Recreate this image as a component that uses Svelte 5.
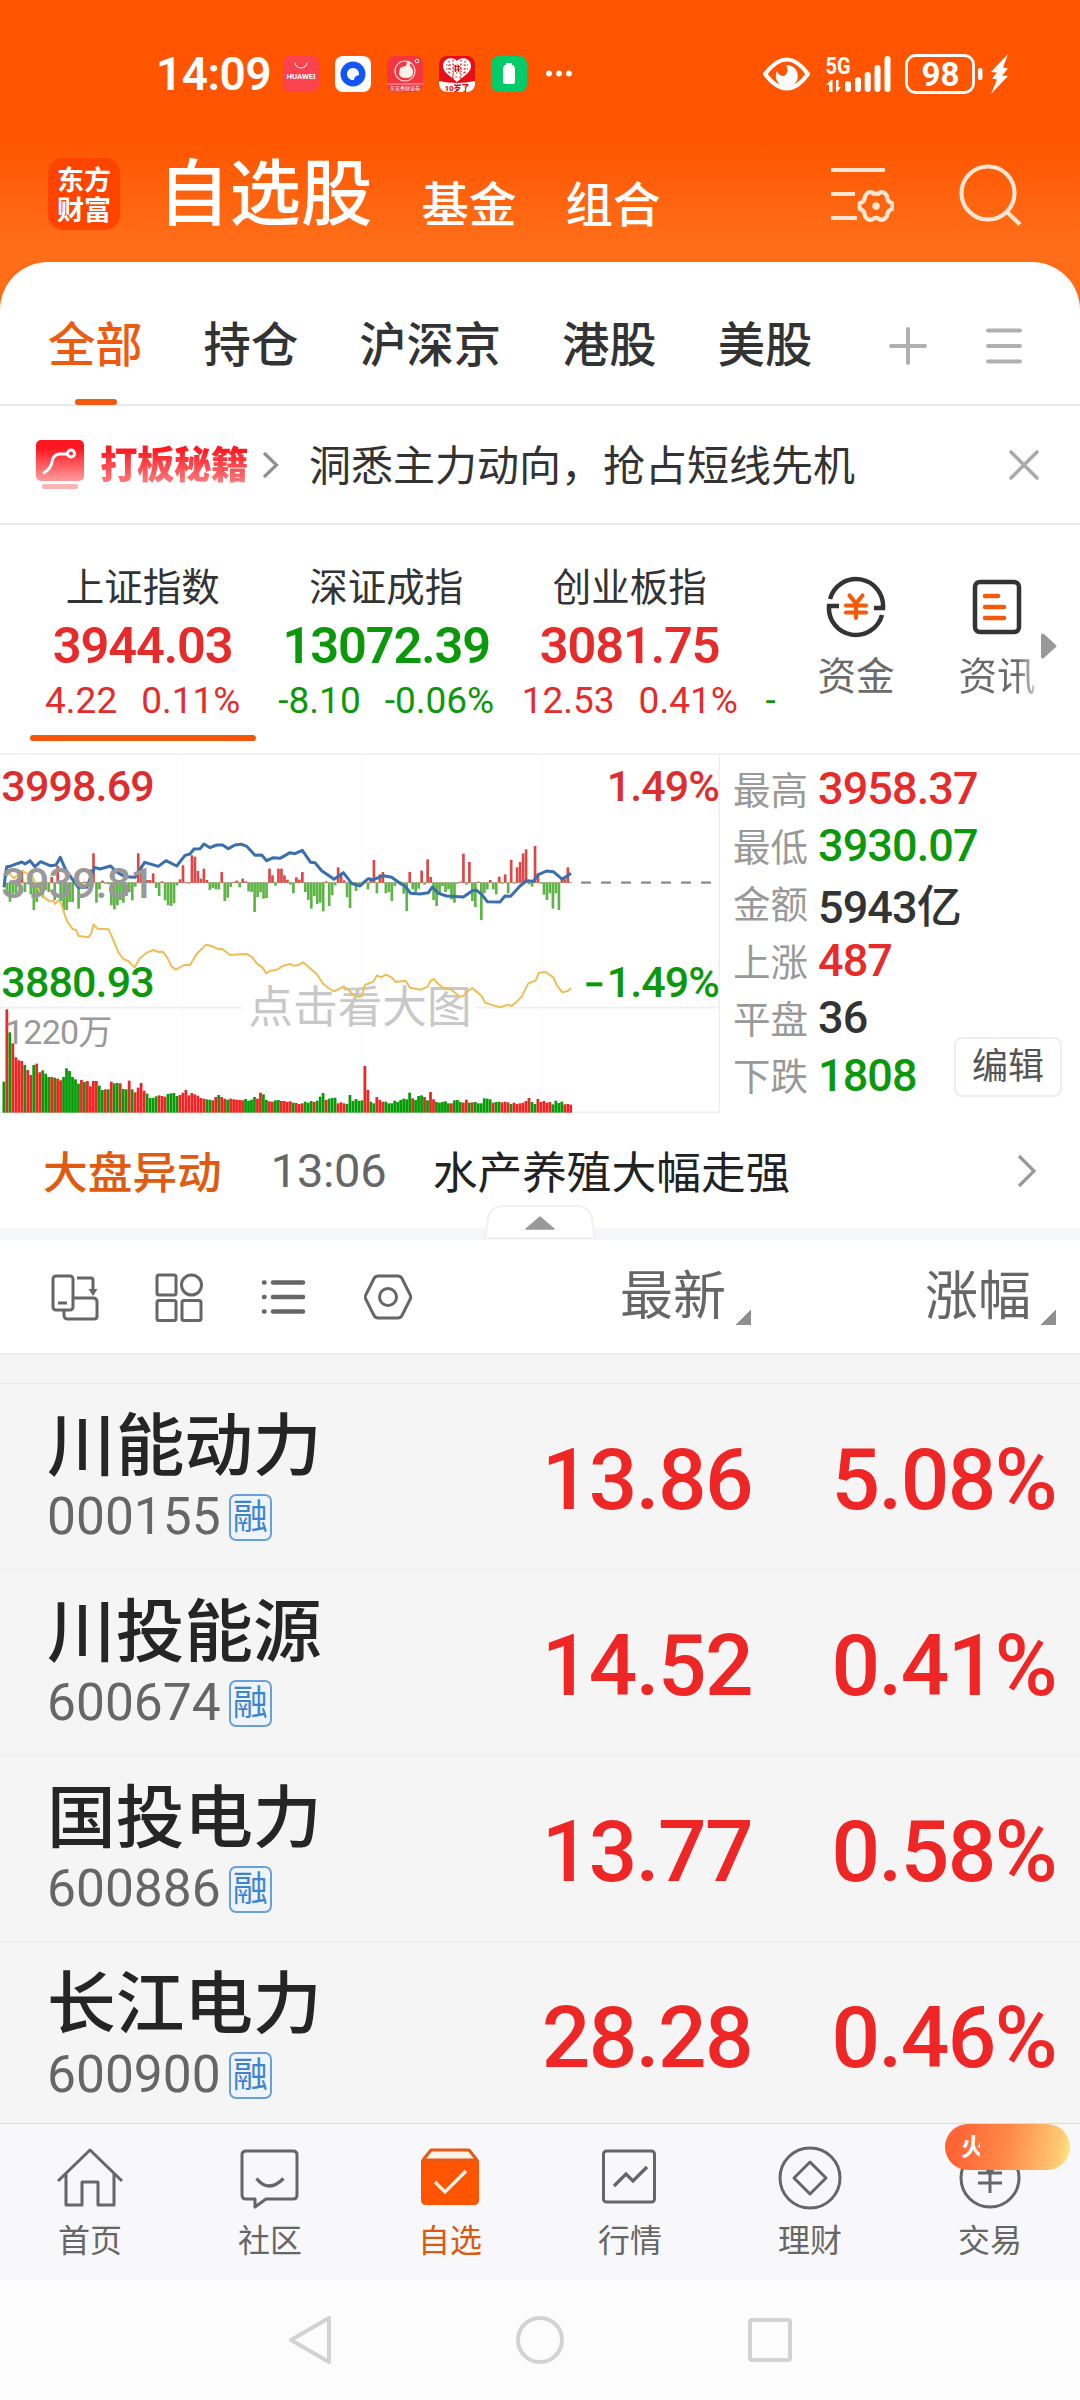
<script>
    const markets = [
        { name: '全部', active: true },
        { name: '持仓' },
        { name: '沪深京' },
        { name: '港股' },
        { name: '美股' }
    ]

    const indices = [
        { name: '上证指数', value: '3944.03', change: '4.22', percent: '0.11%', up: true, active: true },
        { name: '深证成指', value: '13072.39', change: '-8.10', percent: '-0.06%', up: false },
        { name: '创业板指', value: '3081.75', change: '12.53', percent: '0.41%', up: true }
    ]

    const stats = [
        { label: '最高', value: '3958.37', tone: 'up' },
        { label: '最低', value: '3930.07', tone: 'down' },
        { label: '金额', value: '5943亿', tone: '' },
        { label: '上涨', value: '487', tone: 'up' },
        { label: '平盘', value: '36', tone: '' },
        { label: '下跌', value: '1808', tone: 'down' }
    ]

    const stocks = [
        { name: '川能动力', code: '000155', price: '13.86', percent: '5.08%' },
        { name: '川投能源', code: '600674', price: '14.52', percent: '0.41%' },
        { name: '国投电力', code: '600886', price: '13.77', percent: '0.58%' },
        { name: '长江电力', code: '600900', price: '28.28', percent: '0.46%' }
    ]

    // volume per minute bar, r = up, g = down
    const volume = ('g93 r310 g241 r208 r166 r157 r155 g143 r128 r113 g143 r147 r121 g127 g117 g107 r107 g105 r102 r97 g107 g133 g125 g107 g100 g87 r98 g92 r95 r79 r95 r95 g81 g68 r70 g70 r93 g88 g89 r88 g71 g70 r96 g70 r61 r75 r89 r66 g57 g44 g44 g49 r52 r50 r48 g56 g58 g59 g50 r53 r60 r68 r52 r59 r55 r51 r44 r42 g40 g39 r37 r47 g53 r47 r42 g39 r42 r40 r39 r38 r37 g41 g36 g39 g47 r42 r60 g55 g38 r34 r33 g37 g38 r35 r35 r32 r34 g30 r29 r26 r28 g33 g30 g35 r32 g36 g48 g59 r38 g42 g44 g45 r28 r31 r28 g26 g53 g35 g41 g36 '
        + 'g37 r140 r68 g33 g28 r47 r38 r33 g33 g28 g28 g36 g32 g38 g42 g40 g60 r43 g38 g50 g52 r47 g37 r62 r40 g32 g30 g32 g34 g28 r28 g37 g38 g32 r30 r39 g30 r31 g32 g28 g28 g43 g42 g40 r30 g32 g33 r31 r33 r31 g26 r30 r26 r28 r30 r35 r44 g32 g26 r41 r32 r35 r30 r32 g25 g36 g29 g33 r25 r26 r24').split(' ')

    const momentum = [
        0, -35, -57, -33, -33, 25, 32, -28, -5, -35, -82, -58, -35, -45, -22, -28, 17, -52, 50, -55, -82, -82, -58, -58, 3, -78, -5, 3, -5, 40,
        88, -60, -20, 6, -3, -5, -68, -80, -68, -52, -60, -40, -28, -53, -12, 88, 50, 22, 8, 8, 28, -16, -40, 4, -53, -68, -70, -62, -8, 10,
        52, 2, -3, 82, 78, 35, 12, 42, 8, -22, -16, -20, -20, 32, -55, -45, -13, 2, 6, -14, 12, 4, -26, -28, -88, -43, -29, -48, -46, 42,
        22, -9, 42, 42, 22, 9, -6, -32, 16, 9, 32, -28, -52, -78, -40, -64, -60, -86, 4, -70, -38, -8, 46, 28, 7, -44, -76, -8, -25,
        -6, -8, 6, -20, 14, 68, -32, 25, 32, -32, -28, -55, -10, 3, 3, -33, -85, 32, -20, -28, -18, 36, -6, 70, 17, -52, -70, -36, -10, -28,
        -20, -50, -60, -3, 3, 87, -6, 62, -55, -73, 3, -112, -32, -20, 8, -20, -35, 18, -3, 25, -32, 68, -3, 46, 62, 88, 100, -5, -12, 110,
        28, -3, -36, -52, -32, -78, -32, -82, 12, 10, 46
    ]

    const priceLine = '12,412 15,385 20,350 30,349 45,343 66,336 75,342 90,332 105,350 122,335 150,347 168,345 181,322 195,355 210,378 235,412 260,412 284,352 300,357 332,348 348,365 375,380 405,382 420,358 434,337 455,343 475,349 498,332 530,348 555,316 570,312 582,297 600,296 612,282 630,293 650,285 668,285 685,296 705,285 725,283 740,289 765,316 785,315 800,332 820,323 840,325 870,308 885,311 907,301 932,337 945,338 965,362 985,376 1002,388 1030,368 1055,400 1080,408 1095,394 1105,386 1120,389 1150,377 1175,382 1200,400 1215,408 1232,430 1260,432 1285,428 1297,411 1315,430 1340,438 1390,441 1417,422 1430,421 1445,433 1462,455 1500,456 1515,438 1532,439 1560,408 1580,392 1600,394 1615,374 1640,363 1660,365 1687,388 1713,370'
    const averageLine = '20,355 30,372 42,385 66,362 80,370 95,375 110,410 130,440 150,455 160,452 166,462 175,450 185,465 200,512 218,537 228,540 236,558 265,562 274,550 281,523 292,536 326,538 340,570 355,607 370,627 385,633 404,652 420,625 440,608 461,600 475,606 488,605 500,620 515,650 528,659 552,645 570,645 590,612 618,584 635,588 655,598 665,596 690,615 740,612 755,620 770,640 787,652 798,670 812,662 830,660 850,647 870,642 880,647 893,646 910,637 930,655 950,672 970,702 985,714 1003,724 1030,710 1045,718 1060,735 1080,741 1085,738 1095,705 1120,695 1131,676 1143,682 1157,674 1175,682 1187,696 1217,692 1230,713 1262,719 1283,710 1292,692 1301,687 1315,702 1330,714 1352,718 1380,740 1390,738 1400,725 1417,714 1445,738 1455,758 1480,766 1500,772 1525,764 1535,768 1548,757 1565,740 1585,700 1607,692 1617,668 1637,666 1660,682 1670,705 1687,727 1705,722 1713,714'
</script>

<style>
    :global(body) {
        background: #fcfcfc;
    }

    .app {
        width: 1080px;
        height: 2400px;
        overflow: hidden;
        display: flex;
        flex-direction: column;
        font-family: Roboto, "Noto Sans CJK SC", sans-serif;
        color: #333;
        white-space: nowrap;
    }

    svg {
        display: block;
        flex: none;
    }

    .up {
        color: #e62b2b;
    }

    .down {
        color: #0b980b;
    }

    .top {
        height: 310px;
        flex: none;
        background: linear-gradient(#ff5500 0, #ff5500 140px, #ff6d18 240px, #ff6d18 100%);
        color: #fff;
    }

    .status {
        height: 148px;
        display: flex;
        align-items: center;
        padding: 0 72px 0 156px;
        box-sizing: border-box;
    }

    .clock {
        width: 127px;
        font-size: 46px;
        font-weight: 600;
        letter-spacing: -0.5px;
    }

    .notices {
        display: flex;
        gap: 16px;
        flex: 1;
    }

    .header {
        display: flex;
        padding-left: 48px;
        height: 92px;
    }

    .logo {
        width: 72px;
        height: 72px;
        margin-top: 10px;
        border-radius: 15px;
        background: #ff4400;
        font-family: "Noto Sans CJK SC", sans-serif;
        font-size: 27px;
        font-weight: 700;
        line-height: 30px;
        text-align: center;
        box-sizing: border-box;
        padding-top: 6px;
    }

    .title {
        margin-left: 38px;
        font-size: 71.5px;
        line-height: 94px;
        font-weight: 500;
    }

    .section {
        margin-left: 49px;
        font-size: 47.5px;
        line-height: 117px;
        font-weight: 500;
    }

    .actions {
        flex: 1;
        display: flex;
        justify-content: flex-end;
        gap: 65px;
        padding: 16px 58px 0 0;
    }

    .sheet {
        flex: none;
        height: 144px;
        margin-top: -48px;
        border-radius: 48px 48px 0 0;
        background: #fff;
        border-bottom: 2px solid #e8e8e8;
        box-sizing: border-box;
        display: flex;
        align-items: center;
        padding: 25px 54px 0 48px;
    }

    .market {
        position: relative;
        margin-right: 61px;
        font-size: 47.3px;
        line-height: 70px;
        font-weight: 500;
    }

    .market.active {
        color: #ee5a0e;
    }

    .market.active::after {
        content: '';
        position: absolute;
        left: 27px;
        bottom: -24px;
        width: 42px;
        height: 6px;
        border-radius: 3px;
        background: #f2590c;
    }

    .sheet .menu {
        margin-left: 58px;
    }

    .sheet .plus {
        margin-left: 16px;
    }

    .promo {
        flex: none;
        height: 119px;
        background: #fff;
        border-bottom: 2px solid #e8e8e8;
        box-sizing: border-box;
        display: flex;
        align-items: center;
        padding: 0 41px 0 36px;
    }

    .promo-name {
        margin: 0 14px 0 15px;
        padding-bottom: 5px;
        font-family: "Noto Sans CJK SC", sans-serif;
        font-size: 37.5px;
        line-height: 54px;
        font-weight: 900;
        background: linear-gradient(#ff1a22 25%, #ff8080 85%);
        background-clip: text;
        color: transparent;
        letter-spacing: -0.5px;
    }

    .promo-text {
        margin-left: 29px;
        padding-bottom: 5px;
        flex: 1;
        font-size: 42px;
    }

    .indices {
        flex: none;
        height: 230px;
        background: #fff;
        border-bottom: 2px solid #f3f3f3;
        box-sizing: border-box;
        display: flex;
    }

    .index-strip {
        width: 778px;
        padding-left: 21px;
        box-sizing: border-box;
        display: flex;
        overflow: hidden;
    }

    .index {
        position: relative;
        width: 243.5px;
        flex: none;
        display: flex;
        flex-direction: column;
        align-items: center;
    }

    .index.active::after {
        content: '';
        position: absolute;
        left: 9px;
        top: 210px;
        width: 226px;
        height: 6px;
        border-radius: 3px;
        background: #f5560a;
    }

    .index-name {
        margin-top: 37px;
        font-size: 38.5px;
        line-height: 52px;
    }

    .index-value {
        font-size: 50.5px;
        line-height: 60px;
        font-weight: 600;
        margin-top: 2px;
        letter-spacing: -1.1px;
    }

    .index-change {
        display: flex;
        gap: 24px;
        font-size: 37px;
        line-height: 44px;
        margin-top: 3px;
    }

    .peek {
        font-size: 37px;
        line-height: 44px;
        margin: 154px 0 0 14px;
    }

    .shortcut {
        display: flex;
        flex-direction: column;
        align-items: center;
        width: 80px;
        margin: 51px 0 0 38px;
        font-size: 38.5px;
        line-height: 50px;
        color: #6a6a6a;
    }

    .shortcut span {
        margin-top: 14px;
    }

    .shortcut + .shortcut {
        margin-left: 61px;
    }

    .fade {
        background: linear-gradient(90deg, #6a6a6a 75%, #c4c4c4);
        background-clip: text;
        color: transparent;
    }

    .next {
        margin: 108px 0 0 4px;
    }

    .quote {
        flex: none;
        height: 358px;
        display: flex;
        background: #fff;
    }

    .chart text {
        font-family: Roboto, "Noto Sans CJK SC", sans-serif;
    }

    .side {
        flex: 1;
        display: flex;
        justify-content: space-between;
        padding: 5px 18px 0 13px;
    }

    .stats {
        width: 210px;
    }

    .stat {
        display: flex;
        align-items: center;
        height: 57.3px;
        font-size: 45px;
        font-weight: 500;
        letter-spacing: -0.9px;
    }

    .stat-label {
        flex: none;
        width: 85px;
        padding-bottom: 3px;
        font-size: 37.5px;
        font-weight: 400;
        letter-spacing: 0;
        color: #999;
    }

    .edit {
        align-self: flex-end;
        margin-bottom: 16px;
        width: 108px;
        height: 60px;
        line-height: 56px;
        border: 2px solid #eee;
        border-radius: 8px;
        box-sizing: border-box;
        text-align: center;
        font-size: 36px;
        color: #555;
    }

    .event {
        position: relative;
        flex: none;
        height: 127px;
        box-sizing: border-box;
        border-bottom: 12px solid #f5f7fa;
        background: #fff;
        display: flex;
        align-items: center;
        padding: 0 43px 0 43px;
        font-size: 44.7px;
        color: #222;
    }

    .event-kind {
        padding-bottom: 2px;
        color: #e05a10;
        font-weight: 500;
    }

    .event-time {
        width: 162px;
        margin-left: 49px;
        font-size: 47px;
        letter-spacing: -0.3px;
        color: #666;
    }

    .event-text {
        padding-bottom: 2px;
        flex: 1;
    }

    .handle {
        position: absolute;
        left: 484px;
        top: 92px;
    }

    .tools {
        flex: none;
        height: 114px;
        box-sizing: border-box;
        background: #fff;
        border-bottom: 1px solid #e8e8e8;
        display: flex;
        align-items: center;
        padding: 0 24px 0 50px;
        color: #666;
    }

    .tools svg {
        margin-right: 55px;
    }

    .sort {
        display: flex;
        font-size: 53px;
        line-height: 78px;
        color: #666;
    }

    .sort:first-of-type {
        margin-left: auto;
    }

    .sort + .sort {
        margin-left: 174px;
    }

    .sort::after {
        content: '';
        width: 15px;
        height: 15px;
        margin: 52px 0 0 10px;
        background: linear-gradient(135deg, transparent 50%, #8e8e93 50%);
    }

    .list {
        height: 769px;
        flex: none;
        overflow: hidden;
        background: #f5f5f5;
        padding-top: 29px;
        box-sizing: border-box;
    }

    .stock {
        height: 186px;
        box-sizing: border-box;
        border-top: 1px solid #ebebeb;
        display: flex;
        align-items: center;
        padding: 0 24px 0 47px;
    }

    .stock-name {
        font-size: 68.7px;
        line-height: 78px;
        font-weight: 500;
        color: #252525;
    }

    .stock-code {
        display: flex;
        align-items: center;
        margin-top: 1px;
        font-size: 51.5px;
        line-height: 60px;
        color: #666;
    }

    .stock-id {
        width: 430px;
        padding-top: 2px;
    }

    .tag {
        margin-left: 8px;
        width: 43px;
        height: 47px;
        border: 2px solid #6aa0da;
        border-radius: 7px;
        box-sizing: border-box;
        background: #eef4fb;
        color: #3d84cf;
        font-size: 35px;
        line-height: 43px;
        text-align: center;
    }

    .price,
    .percent {
        font-size: 85.5px;
        font-weight: 500;
        line-height: 100px;
        color: #ee2626;
        text-align: right;
        letter-spacing: -1.6px;
        padding-top: 6px;
    }

    .price {
        width: 275px;
    }

    .percent {
        flex: 1;
    }

    .tabbar {
        flex: none;
        height: 157px;
        box-sizing: border-box;
        border-top: 1px solid #dcdcdc;
        background: #f8f8fa;
        display: flex;
    }

    .tab {
        position: relative;
        width: 180px;
        padding-top: 20px;
        display: flex;
        flex-direction: column;
        align-items: center;
        font-size: 32px;
        line-height: 40px;
        color: #666;
    }

    .tab svg {
        margin-bottom: 9px;
    }

    .tab.active {
        color: #d95a12;
    }

    .badge {
        position: absolute;
        left: 45px;
        top: 0;
        width: 125px;
        height: 46px;
        border-radius: 23px;
        box-sizing: border-box;
        padding-left: 16px;
        background: linear-gradient(100deg, #ff6437 10%, #ff8a48 50%, #ffcb75 90%, #fff08a);
        color: #fff;
        font-size: 25px;
        font-weight: 700;
        line-height: 48px;
    }

    .badge span {
        display: block;
        width: 19px;
        overflow: hidden;
    }

    .system {
        flex: none;
        height: 120px;
        background: #fcfcfc;
        display: flex;
        justify-content: center;
        align-items: center;
        gap: 182px;
    }
</style>

<div class="app">
    <div class="top">
        <div class="status">
            <div class="clock">14:09</div>
            <div class="notices">
                <svg width="36" height="36" viewBox="0 0 36 36">
                    <rect width="36" height="36" rx="8" fill="#fb4350" />
                    <path d="M12 6.500a6 5.500 0 0 0 12 0" fill="none" stroke="#fff" stroke-width="1" />
                    <text x="18" y="23" text-anchor="middle" textLength="29" lengthAdjust="spacingAndGlyphs" font-size="7" font-weight="700" fill="#fff">HUAWEI</text>
                </svg>
                <svg width="36" height="36" viewBox="0 0 36 36">
                    <rect width="36" height="36" rx="8" fill="#fff" />
                    <circle cx="18" cy="18" r="12.500" fill="#1456f5" />
                    <path d="M18 12a6 6 0 1 0 1 11.900q0-4 5-5A6 6 0 0 0 18 12z" fill="#fff" />
                </svg>
                <svg width="36" height="36" viewBox="0 0 36 36">
                    <rect width="36" height="36" rx="8" fill="#f53540" />
                    <circle cx="18" cy="15" r="10" fill="none" stroke="#ffd9d2" stroke-width="1.200" />
                    <path d="M13 12q3-2 6-2l1-5 3 0v5q3 2 3 6 0 6-7 6t-7-5z" fill="#fff0ea" />
                    <circle cx="30" cy="5" r="1.800" fill="none" stroke="#fff" />
                    <path d="M0 28h36" stroke="#ffb0b0" stroke-width="1" />
                    <text x="18" y="34" text-anchor="middle" font-size="5" fill="#fff">东吴秀财证券</text>
                </svg>
                <svg width="36" height="36" viewBox="0 0 36 36">
                    <rect width="36" height="36" rx="8" fill="#e60f18" />
                    <path d="M0 25q18 4 36 0v3a8 8 0 0 1-8 8H8a8 8 0 0 1-8-8z" fill="#fff" />
                    <path d="M18 5C14 0 4 2 4 10c0 7 9 11 14 16 5-5 14-9 14-16 0-8-10-10-14-5z" fill="#fff" />
                    <path d="M7 9h22M7 13h22M10 17h16M13 21h10M10 5v14M14 4v19M22 4v19M26 5v14" stroke="#e60f18" stroke-width="1.200" stroke-dasharray="1.500 2" />
                    <path d="M15 10.500h6M15 14h6M16.500 9v7M19.500 9v7" stroke="#e60f18" stroke-width="1" />
                    <text x="18" y="34.500" text-anchor="middle" font-size="8" font-weight="800" fill="#d01018">10岁了</text>
                </svg>
                <svg width="36" height="36" viewBox="0 0 36 36">
                    <rect width="36" height="36" rx="8" fill="#04cb69" />
                    <path d="M15 7h6v2h1.500q1.500 2 1.500 4v13q0 2-2 2h-8q-2 0-2-2V13q0-2 1.500-4H15z" fill="#fff" />
                </svg>
                <svg width="30" height="36" viewBox="0 0 30 36" fill="#fff">
                    <circle cx="6" cy="17.500" r="2.900" /><circle cx="16" cy="17.500" r="2.900" /><circle cx="26" cy="17.500" r="2.900" />
                </svg>
            </div>
            <svg width="246" height="44" viewBox="762 51 246 44" fill="#fff">
                <path d="M765 73q22-29 43 0-21 29-43 0z" fill="none" stroke="#fff" stroke-width="4.200" stroke-linejoin="round" />
                <path d="M786 64a11 11 0 1 1-9 6q2 5 7 5 6-4 2-11z" />
                <text x="825.500" y="73" textLength="25" lengthAdjust="spacingAndGlyphs" font-size="23.500" font-weight="700">5G</text>
                <path d="M826 84l5-5h1.500v12H829v-7.500zM836 79h2.500v7h2.500l-4 5h-1z" />
                <rect x="845" y="80" width="6" height="11" rx="3" /><rect x="855" y="76" width="6" height="15" rx="3" />
                <rect x="864.700" y="71" width="6" height="20" rx="3" /><rect x="874.500" y="64" width="6" height="27" rx="3" />
                <rect x="884.500" y="55" width="6" height="36" rx="3" />
                <rect x="906.500" y="54.500" width="67" height="37" rx="9" fill="none" stroke="#fff" stroke-width="2.800" />
                <text x="940.500" y="85" text-anchor="middle" textLength="38" lengthAdjust="spacingAndGlyphs" font-size="34" font-weight="700">98</text>
                <rect x="978" y="67" width="4.500" height="12" rx="2" />
                <path d="M1008 53l-17 18 6 .500-5 6 5 1-6 14.500 17-18-6-.500 6-7-5-1z" />
            </svg>
        </div>
        <div class="header">
            <div class="logo">东方<br />财富</div>
            <div class="title">自选股</div>
            <div class="section">基金</div>
            <div class="section">组合</div>
            <div class="actions">
                <svg width="64" height="60" viewBox="830 164 64 60" fill="none" stroke="#ffe6d2" stroke-width="4.200">
                    <path d="M831 170h54M831 194h24M831 218h26" />
                    <path d="M871 192q5 4 10 0 4 0 6 4 0 6 5 7 1 3 0 6-5 2-5 7-2 4-6 4-5-4-10 0-4 0-6-4 0-5-5-7-1-3 0-6 5-1 5-7 2-4 6-4z" stroke-linejoin="round" />
                    <circle cx="876" cy="206" r="3.800" fill="#ffe6d2" stroke="none" />
                </svg>
                <svg width="63" height="64" viewBox="958 162 63 64" fill="none" stroke="#ffe6d2" stroke-width="4.200">
                    <circle cx="987" cy="191" r="26.500" /><path d="M1005.500 209.500l13.500 13" />
                </svg>
            </div>
        </div>
    </div>

    <div class="sheet">
        {#each markets as market}
            <div class="market" class:active={market.active}>{market.name}</div>
        {/each}
        <svg class="plus" width="38" height="38" viewBox="0 0 38 38" stroke="#b0b0b0" stroke-width="4" stroke-linecap="round"><path d="M2 19h34M19 2v34" /></svg>
        <svg class="menu" width="38" height="38" viewBox="0 0 38 38" stroke="#b0b0b0" stroke-width="4" stroke-linecap="round"><path d="M3 3.500h32M3 19h32M3 34.500h32" /></svg>
    </div>

    <div class="promo">
        <svg width="49" height="50" viewBox="0 0 49 50">
            <defs>
                <linearGradient id="promo" x1="0" y1="0" x2="0" y2="1"><stop offset="0.200" stop-color="#ff1620" /><stop offset="1" stop-color="#ff9c9c" /></linearGradient>
            </defs>
            <rect width="48" height="41" rx="5" fill="url(#promo)" />
            <path d="M8 33q7-5 8-11 1-7 7-8h8" fill="none" stroke="#fff" stroke-width="3" stroke-linecap="round" />
            <circle cx="35" cy="13.500" r="3.500" fill="none" stroke="#fff" stroke-width="3" />
            <rect x="6" y="44" width="36" height="5" rx="2" fill="#f9b5b5" />
        </svg>
        <div class="promo-name">打板秘籍</div>
        <svg width="18" height="28" viewBox="0 0 18 28" fill="none" stroke="#909090" stroke-width="3.200"><path d="M2 2l12.500 12L2 26" /></svg>
        <div class="promo-text">洞悉主力动向，抢占短线先机</div>
        <svg width="30" height="30" viewBox="0 0 30 30" stroke="#aaa" stroke-width="3.600" stroke-linecap="round"><path d="M2 2l26 26M28 2L2 28" /></svg>
    </div>

    <div class="indices">
        <div class="index-strip">
            {#each indices as index}
                <div class="index" class:active={index.active}>
                    <div class="index-name">{index.name}</div>
                    <div class="index-value {index.up ? 'up' : 'down'}">{index.value}</div>
                    <div class="index-change {index.up ? 'up' : 'down'}"><span>{index.change}</span><span>{index.percent}</span></div>
                </div>
            {/each}
            <div class="peek down">-</div>
        </div>
        <div class="shortcut">
            <svg width="62" height="62" viewBox="0 0 62 62" fill="none" stroke="#333" stroke-width="4.500">
                <path d="M5 23a27 27 0 0 1 53 9h-9M57 39a27 27 0 0 1-53-9h10" />
                <path d="M24.500 19.500l6.500 8 6.500-8M31 27v15M21 29.500h20M21 36.500h20" stroke="#f55a0a" stroke-width="4.200" stroke-linecap="round" />
            </svg>
            <span>资金</span>
        </div>
        <div class="shortcut">
            <svg width="62" height="62" viewBox="0 0 62 62" fill="none" stroke="#333" stroke-width="4.500">
                <rect x="9" y="6" width="44" height="50" rx="5" />
                <path d="M19 20h13M19 31h19M19 42h19" stroke="#f55a0a" stroke-linecap="round" />
            </svg>
            <span class="fade">资讯</span>
        </div>
        <svg class="next" width="16" height="26" viewBox="0 0 16 26" fill="#999"><path d="M0 2q1-3 4 0l11 10q1 1 0 2L4 24q-3 3-4 0z" /></svg>
    </div>

    <div class="quote">
        <!-- three units per pixel -->
        <svg class="chart" width="720" height="358" viewBox="0 15 2160 1074">
            <path d="M2158 12V1089M0 1087H2160" stroke="#eeeeee" stroke-width="5" />
            <path d="M0 773H727M1427 773H2160" stroke="#f0f0f0" stroke-width="5" />
            <path d="M549 20V1087M1086 20V700M1086 850V1087M1623 20V1087" stroke="#efefef" stroke-width="3" stroke-dasharray="3 5" />
            <path d="M25 398H1716" stroke="#b9a58c" stroke-width="3" />
            <path d="M1743 398H2145" stroke="#8a8a8a" stroke-width="7" stroke-dasharray="30 30" />
            {#each momentum as v, i}
                <rect x={8 + i * 8.95} y={v > 0 ? 398 - v : 398} width="8" height={Math.abs(v)} fill={v > 0 ? '#dc4747' : '#5cb544'} />
            {/each}
            {#each volume as v, i}
                <rect x={7.5 + i * 8.95} y={1088 - v.slice(1)} width="8.300" height={v.slice(1)} fill={v[0] === 'r' ? '#ee2524' : '#079c07'} />
            {/each}
            <text x="745" y="818" font-size="134" fill="#c8c8c8">点击看大图</text>
            <polyline points={averageLine} fill="none" stroke="#efbd55" stroke-width="6" stroke-linejoin="round" />
            <polyline points={priceLine} fill="none" stroke="#3a6fae" stroke-width="9" stroke-linejoin="round" />
            <text x="4" y="153" font-size="129" textLength="460" fill="#de2d2d" font-weight="500">3998.69</text>
            <text x="4" y="443" font-size="129" textLength="460" fill="#999" font-weight="500">3939.81</text>
            <text x="4" y="741" font-size="129" textLength="460" fill="#0b980b" font-weight="500">3880.93</text>
            <text x="15" y="881" font-size="102" textLength="322" fill="#999">1220万</text>
            <text x="1820" y="153" textLength="340" font-size="129" fill="#de2d2d" font-weight="500">1.49%</text>
            <text x="1820" y="741" textLength="340" font-size="129" fill="#0b980b" font-weight="500">1.49%</text>
            <path d="M1759 703h48" stroke="#0b980b" stroke-width="12" />
        </svg>
        <div class="side">
            <div class="stats">
                {#each stats as stat}
                    <div class="stat"><span class="stat-label">{stat.label}</span><span class={stat.tone}>{stat.value}</span></div>
                {/each}
            </div>
            <div class="edit">编辑</div>
        </div>
    </div>

    <div class="event">
        <div class="event-kind">大盘异动</div>
        <div class="event-time">13:06</div>
        <div class="event-text">水产养殖大幅走强</div>
        <svg width="20" height="34" viewBox="0 0 20 34" fill="none" stroke="#999" stroke-width="3.200"><path d="M2 2l15 15L2 32" /></svg>
        <svg class="handle" width="112" height="34" viewBox="0 0 112 34">
            <path d="M1 33L4 14Q6 1 20 1h72q14 0 16 13l3 19z" fill="#fff" stroke="#f1f1f1" stroke-width="2" />
            <path d="M56 12L42 24h28z" fill="#999" stroke="#999" stroke-width="1.500" stroke-linejoin="round" />
        </svg>
    </div>

    <div class="tools">
        <svg width="49" height="50" viewBox="0 0 49 50" fill="none" stroke="currentColor" stroke-width="3">
            <rect x="3" y="4" width="20" height="34" rx="3" />
            <path d="M8 31h9M27 6h14q2 0 2 2v11M14 38v5q0 4 4 4h26q3 0 3-3V30q0-4-4-4H23" />
            <path d="M38.500 17h9L43 24z" fill="currentColor" stroke="none" />
        </svg>
        <svg width="50" height="50" viewBox="0 0 50 50" fill="none" stroke="currentColor" stroke-width="3">
            <rect x="3" y="3" width="19" height="20" rx="2" /><circle cx="37.500" cy="13" r="10" />
            <rect x="3" y="28.500" width="19" height="20" rx="2" /><rect x="28" y="28.500" width="19" height="20" rx="2" />
        </svg>
        <svg width="50" height="50" viewBox="0 0 50 50" stroke="currentColor" stroke-width="4.500" stroke-linecap="round">
            <path d="M5 10.500h.500M14 10.500h30M5 25h.500M14 25h30M5 39.500h.500M14 39.500h30" />
        </svg>
        <svg width="50" height="50" viewBox="0 0 50 50" fill="none" stroke="currentColor" stroke-width="3">
            <path d="M14 4h20q2.500 0 4 2.500l8 16q1.500 2.500 0 5l-8 16q-1.500 2.500-4 2.500H14q-2.500 0-4-2.500l-8-16q-1.500-2.500 0-5l8-16Q11.500 4 14 4z" />
            <circle cx="24" cy="25" r="8.500" />
        </svg>
        <div class="sort">最新</div>
        <div class="sort">涨幅</div>
    </div>

    <div class="list">
        {#each stocks as stock}
            <div class="stock">
                <div class="stock-id">
                    <div class="stock-name">{stock.name}</div>
                    <div class="stock-code">{stock.code}<span class="tag">融</span></div>
                </div>
                <div class="price">{stock.price}</div>
                <div class="percent">{stock.percent}</div>
            </div>
        {/each}
    </div>

    <div class="tabbar">
        <div class="tab">
            <svg width="68" height="68" viewBox="0 0 68 68" fill="none" stroke="#666" stroke-width="3" stroke-linejoin="round">
                <path d="M2 37L34 6l32 31M10 30v31h16V38h16v23h16V30" />
            </svg>
            首页
        </div>
        <div class="tab">
            <svg width="68" height="68" viewBox="0 0 68 68" fill="none" stroke="#666" stroke-width="3" stroke-linejoin="round">
                <path d="M10 7h47q4 0 4 4v40q0 4-4 4H30l-11 8v-8h-9q-4 0-4-4V11q0-4 4-4z" />
                <path d="M20.500 34.500q12 15 27 0" stroke-width="3.300" />
            </svg>
            社区
        </div>
        <div class="tab active">
            <svg width="68" height="68" viewBox="0 0 68 68" fill="none" stroke="#ff5500" stroke-width="3">
                <path d="M5 16h58v40q0 5-5 5H10q-5 0-5-5z" fill="#ff5500" stroke="none" />
                <path d="M7 16l8-10h38l8 10z" fill="#fff1e5" stroke="#e55a14" stroke-linejoin="round" />
                <path d="M19 38l10 10 21-21" stroke="#fff0e2" stroke-width="3.300" />
            </svg>
            自选
        </div>
        <div class="tab">
            <svg width="68" height="68" viewBox="0 0 68 68" fill="none" stroke="#666" stroke-width="3">
                <rect x="7.500" y="7" width="51" height="51" rx="3" />
                <path d="M18 42l12-12 7 7 14-14" stroke-width="3.300" />
            </svg>
            行情
        </div>
        <div class="tab">
            <svg width="68" height="68" viewBox="0 0 68 68" fill="none" stroke="#666" stroke-width="3" stroke-linejoin="round">
                <circle cx="34" cy="34" r="30" />
                <path d="M34 18l16 16-16 16-16-16z" />
            </svg>
            理财
        </div>
        <div class="tab">
            <svg width="68" height="68" viewBox="0 0 68 68" fill="none" stroke="#666" stroke-width="3">
                <circle cx="34" cy="34" r="29" />
                <path d="M24 16l10 13 10-13M34 28v21M22 29h24M22 39h24" />
            </svg>
            交易
            <div class="badge"><span>火</span></div>
        </div>
    </div>

    <div class="system">
        <svg width="46" height="50" viewBox="0 0 46 50" fill="none" stroke="#d2d2d2" stroke-width="4" stroke-linejoin="round"><path d="M42 3v44L4 25z" /></svg>
        <svg width="50" height="50" viewBox="0 0 50 50" fill="none" stroke="#d2d2d2" stroke-width="4"><circle cx="25" cy="25" r="22" /></svg>
        <svg width="46" height="50" viewBox="0 0 46 50" fill="none" stroke="#d2d2d2" stroke-width="4"><rect x="3" y="5" width="40" height="40" rx="2" /></svg>
    </div>
</div>
